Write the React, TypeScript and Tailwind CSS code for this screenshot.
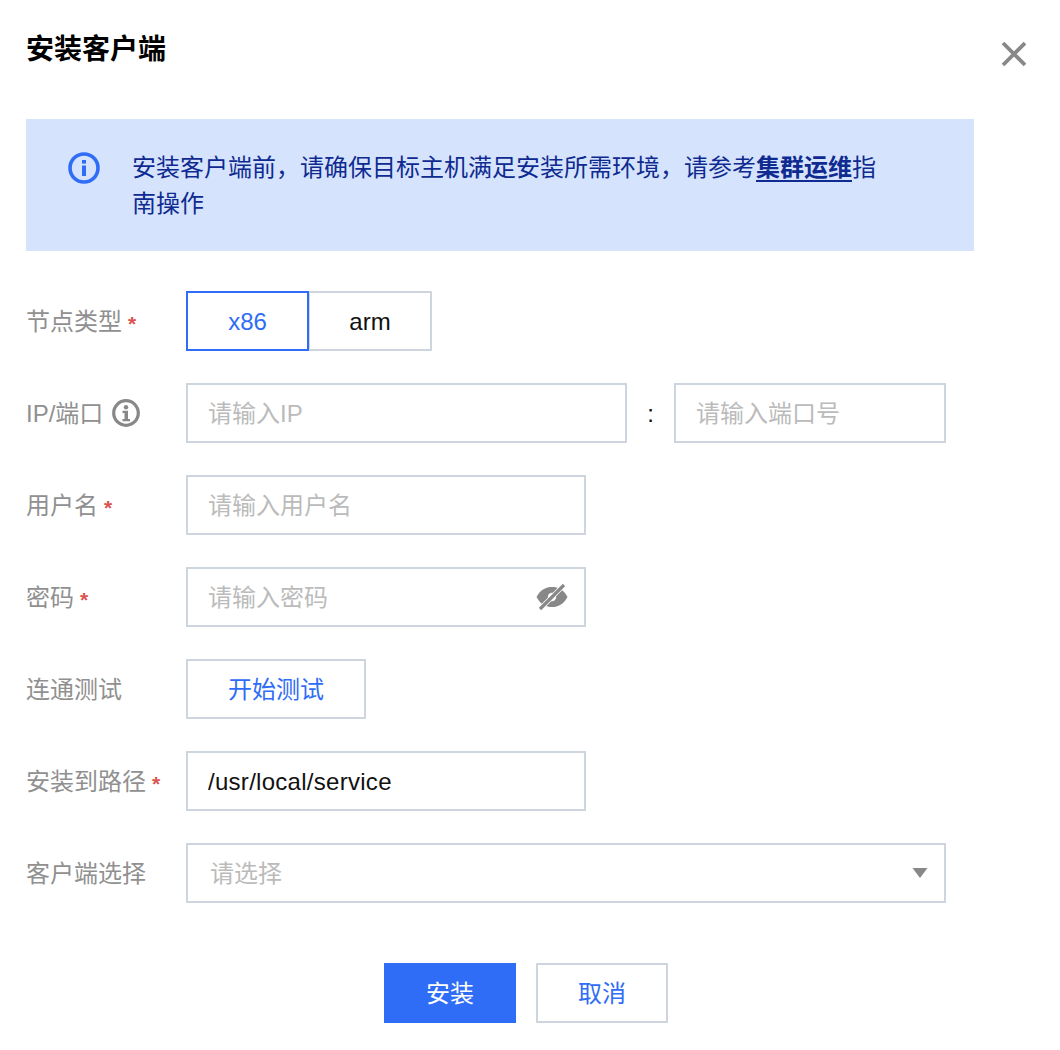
import React from "react";

const font = "font-['Liberation_Sans','Noto_Sans_CJK_SC',sans-serif]";

function Label({ text, req, info }: { text: string; req?: boolean; info?: boolean }) {
  return (
    <div className="w-[160px] shrink-0 flex items-center pt-[2px] text-[24px] leading-[36px] text-[#909090]">
      <span>{text}</span>
      {req && <span className="ml-[6px] text-[#d9534f] font-bold text-[21px] leading-[20px] mt-[3px]">*</span>}
      {info && (
        <svg className="ml-[8px] -mt-[2px]" width="30" height="30" viewBox="0 0 30 30" fill="none">
          <circle cx="15" cy="15" r="12.3" stroke="#888888" strokeWidth="3.2" />
          <circle cx="15" cy="9.300" r="2.200" fill="#888888" />
          <path d="M11.500 12.800h5.500v8.200h2v2.200h-7.500V21h2v-6h-2z" fill="#888888" />
        </svg>
      )}
    </div>
  );
}

function Field({ placeholder, value, className, children }: { placeholder?: string; value?: string; className: string; children?: React.ReactNode }) {
  return (
    <div className={`h-[60px] border-2 border-[#cfd5de] bg-white flex items-center pl-[20px] pr-[16px] shrink-0 ${className}`}>
      <input
        readOnly
        value={value ?? ""}
        placeholder={placeholder}
        className="flex-1 min-w-0 pt-[2px] bg-transparent outline-none text-[24px] tracking-[0.28px] placeholder:tracking-normal text-[#111111] placeholder:text-[#bbbbbb]"
      />
      {children}
    </div>
  );
}

export default function App() {
  return (
    <div className={`${font} w-[1060px] h-[1050px] bg-white pl-[26px] pt-[30px] relative overflow-hidden`}>
      <div className="flex justify-between w-[1000px] h-[89px]">
        <h1 className="text-[28px] leading-[40px] font-bold text-black">安装客户端</h1>
        <svg className="mt-[11px]" width="26" height="26" viewBox="0 0 26 26" fill="none">
          <path d="M3 2l22 22M25 2L3 24" stroke="#888888" strokeWidth="3.800" />
        </svg>
      </div>

      <div className="w-[948px] h-[132px] bg-[#d5e4fc] flex pl-[42px] pr-[84px] pt-[31px]">
        <svg className="shrink-0 mt-[2px]" width="32" height="32" viewBox="0 0 32 32" fill="none">
          <circle cx="16" cy="16" r="14" stroke="#2f6df6" strokeWidth="3.600" />
          <rect x="14" y="8" width="4" height="3.600" fill="#2f6df6" />
          <rect x="14" y="13.500" width="4" height="10.500" fill="#2f6df6" />
        </svg>
        <p className="ml-[32px] text-[24px] leading-[36px] text-[#0f2a90]">
          安装客户端前，请确保目标主机满足安装所需环境，请参考
          <a className="font-bold underline underline-offset-[4px] decoration-2 text-[#0f2a90]">集群运维</a>
          指南操作
        </p>
      </div>

      <div className="mt-[40px] flex flex-col gap-[32px]">
        <div className="flex items-center">
          <Label text="节点类型" req />
          <div className="flex text-[24px]">
            <div className="w-[123px] h-[60px] pt-[2px] border-2 border-[#2f6df6] text-[#2f6df6] flex items-center justify-center relative z-10">x86</div>
            <div className="w-[124px] h-[60px] pt-[2px] -ml-[1px] border-2 border-[#cfd5de] text-[#111111] flex items-center justify-center">arm</div>
          </div>
        </div>

        <div className="flex items-center">
          <Label text="IP/端口" info />
          <Field className="w-[441px]" placeholder="请输入IP" />
          <span className="w-[47px] pt-[2px] text-center text-[24px] text-[#111111]">:</span>
          <Field className="w-[272px]" placeholder="请输入端口号" />
        </div>

        <div className="flex items-center">
          <Label text="用户名" req />
          <Field className="w-[400px]" placeholder="请输入用户名" />
        </div>

        <div className="flex items-center">
          <Label text="密码" req />
          <Field className="w-[400px]" placeholder="请输入密码">
            <svg width="32" height="28" viewBox="0 0 32 28" fill="none">
              <path d="M0.500 14C4.500 6.500 10 4 16 4S27.500 6.500 31.500 14C27.500 21.500 22 24 16 24S4.500 21.500 0.500 14z" fill="#888888" />
              <circle cx="16" cy="14" r="4.200" fill="white" />
              <path d="M4 26L28 2" stroke="white" strokeWidth="4.800" />
              <path d="M4 26L28 2" stroke="#888888" strokeWidth="3.200" />
            </svg>
          </Field>
        </div>

        <div className="flex items-center">
          <Label text="连通测试" />
          <div className="w-[180px] h-[60px] pt-[2px] border-2 border-[#cfd5de] text-[24px] text-[#2f6df6] flex items-center justify-center">开始测试</div>
        </div>

        <div className="flex items-center">
          <Label text="安装到路径" req />
          <Field className="w-[400px]" value="/usr/local/service" />
        </div>

        <div className="flex items-center">
          <Label text="客户端选择" />
          <div className="w-[760px] h-[60px] border-2 border-[#cfd5de] flex items-center justify-between pl-[22px] pr-[16px]">
            <span className="text-[24px] pt-[2px] text-[#bbbbbb]">请选择</span>
            <svg width="16" height="12" viewBox="0 0 16 12"><path d="M0.500 1h15L8 11z" fill="#888888" /></svg>
          </div>
        </div>
      </div>

      <div className="mt-[60px] w-[1000px] flex justify-center gap-[20px] text-[24px]">
        <div className="w-[132px] h-[60px] pt-[2px] bg-[#2f6df6] text-white flex items-center justify-center">安装</div>
        <div className="w-[132px] h-[60px] pt-[2px] border-2 border-[#cfd5de] text-[#2f6df6] flex items-center justify-center">取消</div>
      </div>
    </div>
  );
}
